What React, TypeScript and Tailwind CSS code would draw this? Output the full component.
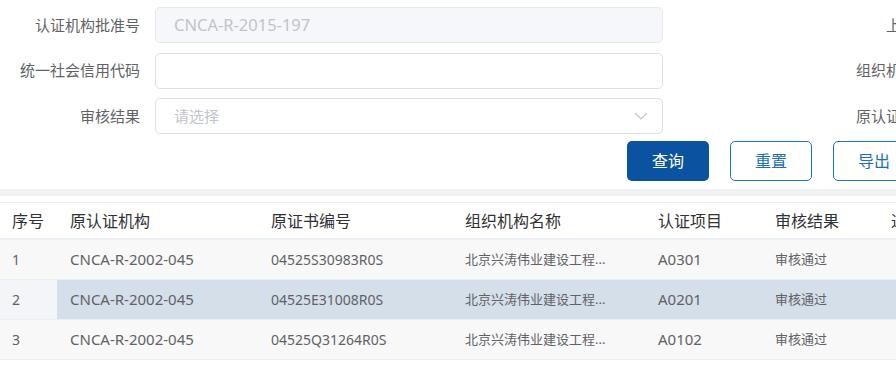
import React from 'react';

const font = { fontFamily: '"Noto Sans", "Noto Sans CJK SC", sans-serif' };

interface Row {
  id: number;
  org: string;
  certNo: string;
  name: string;
  item: string;
  result: string;
}

const rows: Row[] = [
  { id: 1, org: 'CNCA-R-2002-045', certNo: '04525S30983R0S', name: '北京兴涛伟业建设工程...', item: 'A0301', result: '审核通过' },
  { id: 2, org: 'CNCA-R-2002-045', certNo: '04525E31008R0S', name: '北京兴涛伟业建设工程...', item: 'A0201', result: '审核通过' },
  { id: 3, org: 'CNCA-R-2002-045', certNo: '04525Q31264R0S', name: '北京兴涛伟业建设工程...', item: 'A0102', result: '审核通过' },
];

function Chevron() {
  return (
    <svg width="14" height="8" viewBox="0 0 14 8" fill="none">
      <path d="M1 1 L7 7 L13 1" stroke="#c0c4cc" strokeWidth="1.2" />
    </svg>
  );
}

function FormRow({ label, right, children }: { label: string; right: string; children: React.ReactNode }) {
  return (
    <div className="flex items-center h-[36px]">
      <div className="w-[140px] text-right text-[15px] text-[#606266]">{label}</div>
      <div className="ml-[15px] w-[508px] h-full">{children}</div>
      <div className="w-[283px] text-right text-[15px] text-[#606266]">{right}</div>
      <div className="ml-[15px] w-[508px] h-full rounded-[5px] border border-[#dcdfe6] bg-white" />
    </div>
  );
}

export default function App() {
  return (
    <div className="w-[896px] h-[365px] overflow-hidden bg-white" style={font}>
      <div className="w-[1500px]">
        {/* 查询条件 */}
        <div className="pt-[7px] flex flex-col gap-[9.5px]">
          <FormRow label="认证机构批准号" right="上报时间">
            <div className="h-full rounded-[5px] border border-[#e4e7ed] bg-[#f5f7fa] pl-[18px] flex items-center text-[16.5px] text-[#c0c4cc]">
              CNCA-R-2015-197
            </div>
          </FormRow>
          <FormRow label="统一社会信用代码" right="组织机构名称">
            <div className="h-full rounded-[5px] border border-[#dcdfe6] bg-white" />
          </FormRow>
          <FormRow label="审核结果" right="原认证书编号">
            <div className="h-full rounded-[5px] border border-[#dcdfe6] bg-white pl-[18px] pr-[14px] flex items-center justify-between text-[15px] text-[#c0c4cc]">
              <span>请选择</span>
              <Chevron />
            </div>
          </FormRow>
        </div>

        {/* 按钮 */}
        <div className="flex gap-[21px] pl-[627px] mt-[7px]">
          <button className="w-[82px] h-[40px] rounded-[5px] bg-[#0b52a1] text-white text-[16px]">查询</button>
          <button className="w-[82px] h-[40px] rounded-[5px] border border-[#1a74c9] bg-white text-[#1a6ec0] text-[16px]">重置</button>
          <button className="w-[82px] h-[40px] rounded-[5px] border border-[#1a74c9] bg-white text-[#1a6ec0] text-[16px]">导出</button>
        </div>

        <div className="mt-[8px] h-[7px] bg-[#f0f1f2]" />

        {/* 表格 */}
        <div className="mt-[6px] border-t border-[#ebeef5]">
          <div className="grid grid-cols-[57px_202px_194px_193px_117px_116px_200px] h-[37px] items-center text-[16px] text-[#303133] border-b-[2px] border-[#ebeef5]">
            <div className="pl-[12px]">序号</div>
            <div className="pl-[13px]">原认证机构</div>
            <div className="pl-[12px]">原证书编号</div>
            <div className="pl-[12px]">组织机构名称</div>
            <div className="pl-[12px]">认证项目</div>
            <div className="pl-[12px]">审核结果</div>
            <div className="pl-[12px]">通过时间</div>
          </div>
          {rows.map((r) => {
            const active = r.id === 2;
            return (
              <div
                key={r.id}
                className={`grid grid-cols-[57px_202px_194px_193px_117px_116px_200px] h-[40px] items-center text-[14px] text-[#606266] border-b border-[#ebeef5] ${active ? 'bg-[#d5dfe9]' : 'bg-[#f8f8f9]'}`}
              >
                <div className={`pl-[12px] h-full flex items-center ${active ? 'bg-[#f4f5f8]' : ''}`}>{r.id}</div>
                <div className="pl-[13px] text-[15px]">{r.org}</div>
                <div className="pl-[12px]">{r.certNo}</div>
                <div className="pl-[12px] text-[13px]">{r.name}</div>
                <div className="pl-[12px] text-[15px]">{r.item}</div>
                <div className="pl-[12px] text-[13px]">{r.result}</div>
                <div className="pl-[12px]"></div>
              </div>
            );
          })}
        </div>
      </div>
    </div>
  );
}
